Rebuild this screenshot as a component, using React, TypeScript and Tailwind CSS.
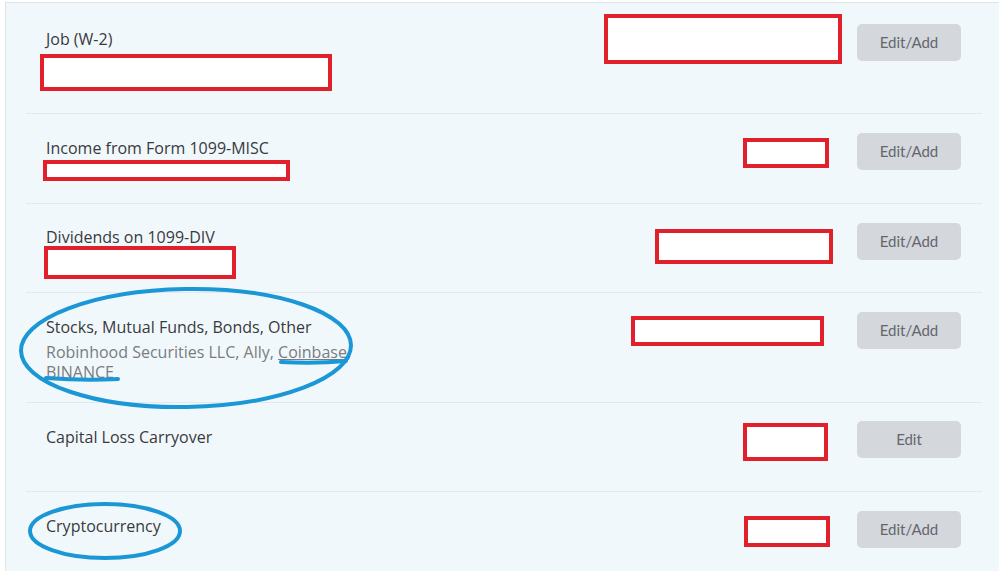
import React from "react";

type Box = { w: number; h: number; mt: number; ml?: number };

type Row = {
  title: string;
  sub?: React.ReactNode;
  button: string;
  height: string;
  pt: string;
  titleMt: string;
  left?: Box;
  right: Box & { mr: number };
};

const rows: Row[] = [
  {
    title: "Job (W-2)",
    button: "Edit/Add",
    height: "h-[111px]",
    pt: "pt-[21px]",
    titleMt: "mt-[4px]",
    left: { w: 292, h: 37, mt: 4, ml: -6 },
    right: { w: 238, h: 50, mt: -10, mr: 15 },
  },
  {
    title: "Income from Form 1099-MISC",
    button: "Edit/Add",
    height: "h-[90px]",
    pt: "pt-[19px]",
    titleMt: "mt-[4px]",
    left: { w: 247, h: 21, mt: 1, ml: -3 },
    right: { w: 86, h: 30, mt: 5, mr: 28 },
  },
  {
    title: "Dividends on 1099-DIV",
    button: "Edit/Add",
    height: "h-[89px]",
    pt: "pt-[19px]",
    titleMt: "mt-[3px]",
    left: { w: 192, h: 33, mt: -2, ml: -2 },
    right: { w: 178, h: 35, mt: 6, mr: 24 },
  },
  {
    title: "Stocks, Mutual Funds, Bonds, Other",
    sub: (
      <>
        Robinhood Securities LLC, Ally, <span className="underline">Coinbase</span>,
        <br />
        <span className="underline">BINANCE</span>
      </>
    ),
    button: "Edit/Add",
    height: "h-[110px]",
    pt: "pt-[19px]",
    titleMt: "mt-[4px]",
    right: { w: 193, h: 30, mt: 4, mr: 33 },
  },
  {
    title: "Capital Loss Carryover",
    button: "Edit",
    height: "h-[89px]",
    pt: "pt-[18px]",
    titleMt: "mt-[5px]",
    right: { w: 85, h: 38, mt: 2, mr: 29 },
  },
  {
    title: "Cryptocurrency",
    button: "Edit/Add",
    height: "h-[90px]",
    pt: "pt-[19px]",
    titleMt: "mt-[4px]",
    right: { w: 86, h: 31, mt: 5, mr: 27 },
  },
];

function Redacted({ box }: { box: Box & { mr?: number } }) {
  return (
    <div
      className="shrink-0 border-4 border-[#e0202b] bg-white"
      style={{
        width: box.w,
        height: box.h,
        marginTop: box.mt,
        marginLeft: box.ml ?? 0,
        marginRight: box.mr ?? 0,
      }}
    />
  );
}

export default function App() {
  return (
    <div className="relative w-[999px] h-[571px] overflow-hidden bg-white font-['Lato','Open_Sans',sans-serif]">
      <div className="ml-[5px] mt-[2px] h-full border-l border-t border-[#dfe4e7] bg-[#f1f8fb] pl-[20px] pr-[17px]">
        {rows.map((row) => (
          <div
            key={row.title}
            className={`flex items-start justify-between border-b border-[#e2e8eb] pl-[20px] pr-[21px] ${row.height} ${row.pt}`}
          >
            <div className="flex flex-col">
              <div className={`text-[16px] leading-[22px] text-[#393a3d] font-['Open_Sans',sans-serif] ${row.titleMt}`}>
                {row.title}
              </div>
              {row.sub && (
                <div className="mt-[4px] text-[16px] leading-[20px] text-[#7a7c80] font-['Open_Sans',sans-serif]">
                  {row.sub}
                </div>
              )}
              {row.left && <Redacted box={row.left} />}
            </div>
            <div className="flex items-start">
              <Redacted box={row.right} />
              <button className="w-[104px] h-[37px] rounded-[5px] bg-[#d4d7dc] text-[15px] text-[#64666c]">
                {row.button}
              </button>
            </div>
          </div>
        ))}
      </div>

      {/* blue markup drawn over the screenshot */}
      <svg
        className="pointer-events-none absolute inset-0"
        width="999"
        height="571"
        viewBox="0 0 999 571"
        fill="none"
      >
        <g stroke="#1b97d6" strokeWidth="4" strokeLinecap="round">
          <ellipse cx="186" cy="348" rx="165" ry="59" transform="rotate(-1 186 348)" />
          <ellipse cx="105" cy="531" rx="75" ry="27" />
          <path d="M281 362 Q315 364 346 361" />
          <path d="M46 378 Q85 381 118 379" />
        </g>
      </svg>
    </div>
  );
}
